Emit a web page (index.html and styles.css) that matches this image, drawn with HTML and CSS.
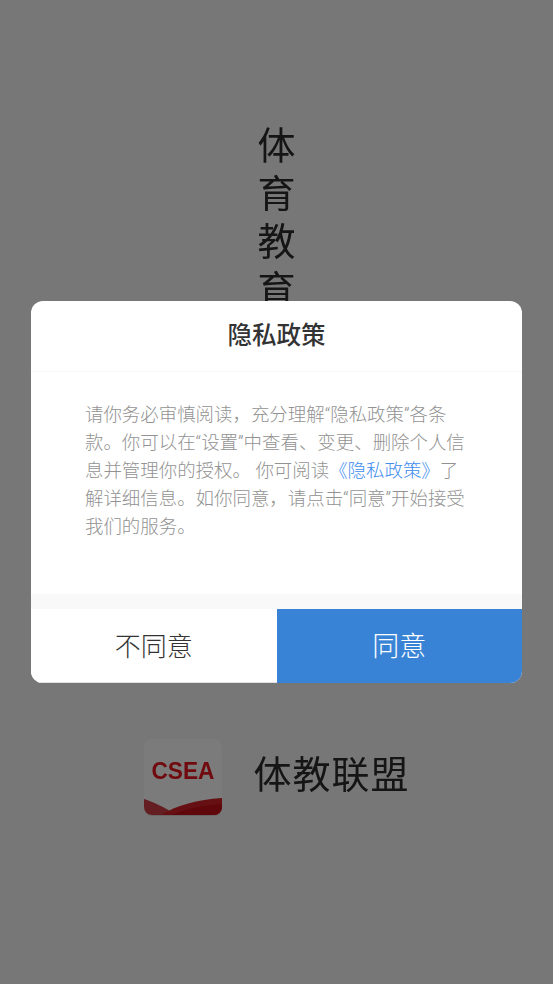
FILE: index.html
```html
<!DOCTYPE html>
<html lang="zh">
<head>
<meta charset="utf-8">
<title>隐私政策</title>
<link rel="stylesheet" href="styles.css">
</head>
<body>
<div class="page">
  <div class="slogan">体<br>育<br>教<br>育</div>
  <div class="brand">
    <svg class="logo" viewBox="0 0 80 80" aria-hidden="true">
      <defs><clipPath id="c"><rect x="1" y="1" width="78" height="76" rx="8"/></clipPath></defs>
      <rect x="1" y="2" width="78" height="76" rx="8" fill="#000" opacity=".12"/>
      <rect x="1" y="1" width="78" height="76" rx="8" fill="#f6f6f6"/>
      <g clip-path="url(#c)">
        <path d="M1 61C10 64 24 70 38 80H1Z" fill="#c83a42"/>
        <path d="M14 80C30 68 52 62 79 60V80Z" fill="#cc2028"/>
        <path d="M22 80C38 72 58 67 79 66V80Z" fill="#c00f16"/>
      </g>
      <text class="logo-text" x="40" y="40.5" text-anchor="middle" textLength="63" lengthAdjust="spacingAndGlyphs">CSEA</text>
    </svg>
    <div class="brand-name">体教联盟</div>
  </div>
</div>
<div class="backdrop">
  <div class="dialog">
    <h1 class="dialog-title">隐私政策</h1>
    <p class="dialog-body">请你务必审慎阅读，充分理解“隐私政策”各条款。你可以在“设置”中查看、变更、删除个人信息并管理你的授权。 你可阅读<a class="link">《隐私政策》</a>了解详细信息。如你同意，请点击“同意”开始接受我们的服务。</p>
    <div class="band"></div>
    <div class="actions">
      <div class="btn btn-no">不同意</div>
      <div class="btn btn-yes">同意</div>
    </div>
  </div>
</div>
</body>
</html>
```
FILE: styles.css
```css
* { box-sizing: border-box; }
html, body { margin: 0; height: 100%; }
body {
  position: relative;
  overflow: hidden;
  background: #eee;
  font-family: Roboto, "Noto Sans CJK SC", sans-serif;
}
.page {
  height: 984px;
  display: flex;
  flex-direction: column;
  align-items: center;
  padding-top: 122px;
  filter: blur(.7px);
}
.slogan {
  font-size: 38px;
  line-height: 48px;
  color: #2a2a2a;
  text-align: center;
  height: 192px;
}
.brand {
  margin-top: 424px;
  display: flex;
  align-items: center;
  gap: 30px;
}
.logo { width: 80px; height: 80px; display: block; }
.logo-text { font: 700 23.5px "Liberation Sans", sans-serif; fill: #e0141c; }
.brand-name { font-size: 38px; line-height: 48px; padding-bottom: 6px; color: #2a2a2a; letter-spacing: 1px; }
.backdrop {
  position: absolute;
  inset: 0;
  background: rgba(0, 0, 0, .5);
  padding: 301px 31px 0;
}
.dialog {
  height: 382px;
  background: #fff;
  border-radius: 12px;
  overflow: hidden;
  display: flex;
  flex-direction: column;
}
.dialog-title {
  margin: 0;
  height: 71px;
  border-bottom: 1px solid #f7f7f7;
  font-size: 24.5px;
  font-weight: 500;
  line-height: 70px;
  text-align: center;
  color: #333;
}
.dialog-body {
  margin: 0;
  flex: 1;
  padding: 29px 54px 0;
  font-size: 18.45px;
  line-height: 28px;
  color: #929292;
  font-weight: 300;
}
.link { color: #3e8ef0; }
.band { height: 15px; background: #f9f9f9; }
.actions { display: flex; height: 74px; }
.btn {
  width: 50%;
  font-size: 26px;
  line-height: 76px;
  text-align: center;
  font-weight: 300;
}
.btn-no { color: #333; background: #fff; border-bottom: 1px solid #e2e2e2; }
.btn-yes { color: #fff; background: #3983d6; font-size: 27px; }
```
